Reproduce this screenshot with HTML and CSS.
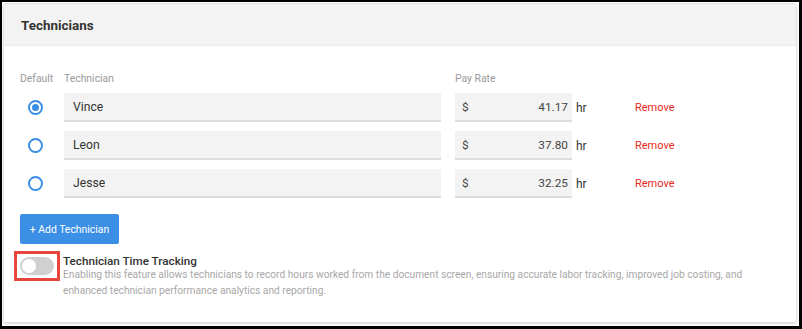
FILE: index.html
```html
<!DOCTYPE html>
<html lang="en">
<head>
    <meta charset="UTF-8">
    <title>Technicians</title>
    <link rel="stylesheet" href="styles.css">
</head>
<body>
    <div class="frame">
        <div class="card">
            <div class="card-header">Technicians</div>

            <div class="card-body">
                <!-- Cabecalho das colunas -->
                <div class="row labels">
                    <div class="col-default">Default</div>
                    <div class="col-name">Technician</div>
                    <div class="col-rate">Pay Rate</div>
                </div>

                <div class="row">
                    <div class="col-default"><span class="radio checked"></span></div>
                    <div class="col-name field">Vince</div>
                    <div class="col-rate field rate"><span>$</span><span>41.17</span></div>
                    <div class="col-unit">hr</div>
                    <a class="remove" href="#">Remove</a>
                </div>

                <div class="row">
                    <div class="col-default"><span class="radio"></span></div>
                    <div class="col-name field">Leon</div>
                    <div class="col-rate field rate"><span>$</span><span>37.80</span></div>
                    <div class="col-unit">hr</div>
                    <a class="remove" href="#">Remove</a>
                </div>

                <div class="row">
                    <div class="col-default"><span class="radio"></span></div>
                    <div class="col-name field">Jesse</div>
                    <div class="col-rate field rate"><span>$</span><span>32.25</span></div>
                    <div class="col-unit">hr</div>
                    <a class="remove" href="#">Remove</a>
                </div>

                <button class="btn-add">+ Add Technician</button>

                <!-- Time tracking -->
                <div class="tracking">
                    <span class="highlight"><span class="toggle"><span class="knob"></span></span></span>
                    <div class="tracking-text">
                        <div class="tracking-title">Technician Time Tracking</div>
                        <div class="tracking-desc">Enabling this feature allows technicians to record hours worked from the document screen, ensuring accurate labor tracking, improved job costing, and enhanced technician performance analytics and reporting.</div>
                    </div>
                </div>
            </div>
        </div>
    </div>
</body>
</html>
```

FILE: styles.css
```css
body {
    margin: 0;
    padding: 0;
    font-family: Roboto, "Liberation Sans", Arial, sans-serif;
    background-color: #fff;
}

.frame {
    width: 802px;
    height: 329px;
    box-sizing: border-box;
    border: 2px solid #000;
    border-right-width: 3px;
    border-bottom-width: 3px;
    padding: 1px 2px 0 1px;
}

.card {
    height: 320px;
    box-sizing: border-box;
    border: 1px solid #e2e2e2;
    border-radius: 3px;
    box-shadow: 0 1px 2px rgba(0, 0, 0, 0.15);
    overflow: hidden;
}

.card-header {
    height: 41px;
    background-color: #f3f3f3;
    border-bottom: 1px solid #ececec;
    padding-left: 17px;
    font-size: 13.4px;
    font-weight: bold;
    color: #333;
    line-height: 43px;
}

.card-body {
    padding: 25px 16px 0 16px;
}

.row {
    display: flex;
    align-items: center;
    height: 29px;
    margin-bottom: 9px;
}

.row.labels {
    height: 14px;
    margin-bottom: 8px;
    font-size: 10.4px;
    color: #9a9a9a;
}

.col-default {
    width: 44px;
}

.col-name {
    width: 377px;
    margin-right: 14px;
}

.col-rate {
    width: 117px;
}

.field {
    height: 29px;
    box-sizing: border-box;
    background-color: #f3f3f3;
    border-bottom: 2px solid #dcdcdc;
    padding: 0 9px;
    font-size: 12.2px;
    color: #333;
    line-height: 29px;
}

.rate {
    display: flex;
    justify-content: space-between;
    padding: 0 4px 0 7px;
    font-size: 11.8px;
    color: #444;
}

.col-unit {
    width: 63px;
    padding-left: 4px;
    box-sizing: border-box;
    font-size: 12px;
    color: #333;
}

.remove {
    font-size: 11px;
    color: #e8291c;
    text-decoration: none;
}

.radio {
    display: block;
    width: 15px;
    height: 15px;
    box-sizing: border-box;
    border: 2px solid #3a8ee6;
    border-radius: 50%;
    margin-left: 8px;
    position: relative;
}

.radio.checked::after {
    content: "";
    position: absolute;
    left: 2px;
    top: 2px;
    width: 7px;
    height: 7px;
    border-radius: 50%;
    background-color: #3a8ee6;
}

.btn-add {
    display: block;
    width: 99px;
    height: 30px;
    margin-top: 16px;
    padding: 0;
    border: none;
    border-radius: 2px;
    background-color: #3b8fe5;
    color: #fff;
    font-family: inherit;
    font-size: 10.4px;
}

.tracking {
    display: flex;
    align-items: flex-start;
    margin-top: 7px;
    margin-left: -6px;
}

.highlight {
    flex: none;
    border: 3px solid #e8453c;
    padding: 3px;
}

.toggle {
    display: block;
    width: 34px;
    height: 18px;
    border-radius: 9px;
    background-color: #d0d0d0;
    position: relative;
}

.knob {
    position: absolute;
    left: 2px;
    top: 2px;
    width: 14px;
    height: 14px;
    border-radius: 50%;
    background-color: #fff;
}

.tracking-text {
    margin-left: 3px;
    margin-top: 4px;
    width: 700px;
}

.tracking-title {
    font-size: 11.7px;
    font-weight: 500;
    color: #333;
    line-height: 12px;
}

.tracking-desc {
    font-size: 10.2px;
    color: #a8a8a8;
    line-height: 16px;
}
```
